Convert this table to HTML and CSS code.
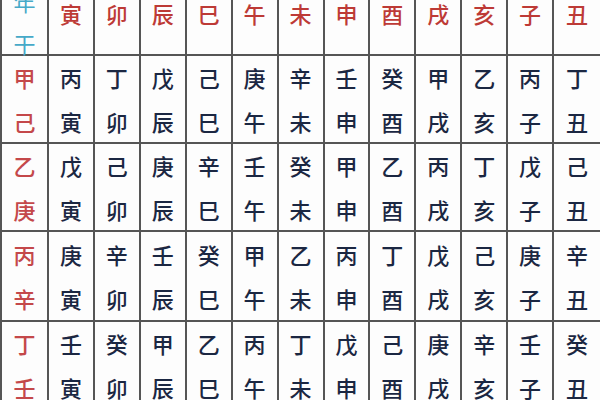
FILE: index.html
```html
<!DOCTYPE html>
<html lang="zh">
<head>
<meta charset="utf-8">
<link rel="stylesheet" href="styles.css">
</head>
<body>
<div class="sheet">
  <div class="grid">
    <div class="cell corner"><span>年</span><span class="gan">干</span></div>
    <div class="cell head">寅</div>
    <div class="cell head">卯</div>
    <div class="cell head">辰</div>
    <div class="cell head">巳</div>
    <div class="cell head">午</div>
    <div class="cell head">未</div>
    <div class="cell head">申</div>
    <div class="cell head">酉</div>
    <div class="cell head">戌</div>
    <div class="cell head">亥</div>
    <div class="cell head">子</div>
    <div class="cell head">丑</div>

    <div class="cell side"><span>甲</span><span>己</span></div>
    <div class="cell body"><span>丙</span><span>寅</span></div>
    <div class="cell body"><span>丁</span><span>卯</span></div>
    <div class="cell body"><span>戊</span><span>辰</span></div>
    <div class="cell body"><span>己</span><span>巳</span></div>
    <div class="cell body"><span>庚</span><span>午</span></div>
    <div class="cell body"><span>辛</span><span>未</span></div>
    <div class="cell body"><span>壬</span><span>申</span></div>
    <div class="cell body"><span>癸</span><span>酉</span></div>
    <div class="cell body"><span>甲</span><span>戌</span></div>
    <div class="cell body"><span>乙</span><span>亥</span></div>
    <div class="cell body"><span>丙</span><span>子</span></div>
    <div class="cell body"><span>丁</span><span>丑</span></div>

    <div class="cell side"><span>乙</span><span>庚</span></div>
    <div class="cell body"><span>戊</span><span>寅</span></div>
    <div class="cell body"><span>己</span><span>卯</span></div>
    <div class="cell body"><span>庚</span><span>辰</span></div>
    <div class="cell body"><span>辛</span><span>巳</span></div>
    <div class="cell body"><span>壬</span><span>午</span></div>
    <div class="cell body"><span>癸</span><span>未</span></div>
    <div class="cell body"><span>甲</span><span>申</span></div>
    <div class="cell body"><span>乙</span><span>酉</span></div>
    <div class="cell body"><span>丙</span><span>戌</span></div>
    <div class="cell body"><span>丁</span><span>亥</span></div>
    <div class="cell body"><span>戊</span><span>子</span></div>
    <div class="cell body"><span>己</span><span>丑</span></div>

    <div class="cell side"><span>丙</span><span>辛</span></div>
    <div class="cell body"><span>庚</span><span>寅</span></div>
    <div class="cell body"><span>辛</span><span>卯</span></div>
    <div class="cell body"><span>壬</span><span>辰</span></div>
    <div class="cell body"><span>癸</span><span>巳</span></div>
    <div class="cell body"><span>甲</span><span>午</span></div>
    <div class="cell body"><span>乙</span><span>未</span></div>
    <div class="cell body"><span>丙</span><span>申</span></div>
    <div class="cell body"><span>丁</span><span>酉</span></div>
    <div class="cell body"><span>戊</span><span>戌</span></div>
    <div class="cell body"><span>己</span><span>亥</span></div>
    <div class="cell body"><span>庚</span><span>子</span></div>
    <div class="cell body"><span>辛</span><span>丑</span></div>

    <div class="cell side"><span>丁</span><span>壬</span></div>
    <div class="cell body"><span>壬</span><span>寅</span></div>
    <div class="cell body"><span>癸</span><span>卯</span></div>
    <div class="cell body"><span>甲</span><span>辰</span></div>
    <div class="cell body"><span>乙</span><span>巳</span></div>
    <div class="cell body"><span>丙</span><span>午</span></div>
    <div class="cell body"><span>丁</span><span>未</span></div>
    <div class="cell body"><span>戊</span><span>申</span></div>
    <div class="cell body"><span>己</span><span>酉</span></div>
    <div class="cell body"><span>庚</span><span>戌</span></div>
    <div class="cell body"><span>辛</span><span>亥</span></div>
    <div class="cell body"><span>壬</span><span>子</span></div>
    <div class="cell body"><span>癸</span><span>丑</span></div>
  </div>
</div>
</body>
</html>
```
FILE: styles.css
```css
html, body {
  margin: 0;
  padding: 0;
  background: #fdfdfd;
  overflow: hidden;
}
body {
  width: 600px;
  height: 400px;
  font-family: "Noto Sans CJK SC", "Noto Sans", sans-serif;
  font-size: 22px;
  font-weight: 500;
  color: #1b2742;
}
.sheet {
  margin-top: -28px;
}
.grid {
  display: grid;
  grid-template-columns: 47px repeat(12, 1fr);
  grid-template-rows: 84px 88px 88px 90px 88px;
  width: 600px;
  border-left: 2px solid #555;
  box-sizing: border-box;
}
.cell {
  border-right: 2px solid #555;
  border-bottom: 2px solid #555;
  display: flex;
  flex-direction: column;
  align-items: center;
  justify-content: center;
  line-height: 44px;
}
.cell span {
  display: block;
}
.cell.head {
  color: #bd3a36;
}
.cell.corner {
  justify-content: flex-start;
  padding-top: 8px;
  line-height: 42px;
  color: #46a9c8;
  font-weight: 400;
}
.cell.side {
  color: #c4484a;
}
.cell:nth-child(13n) {
  border-right: none;
}
```
